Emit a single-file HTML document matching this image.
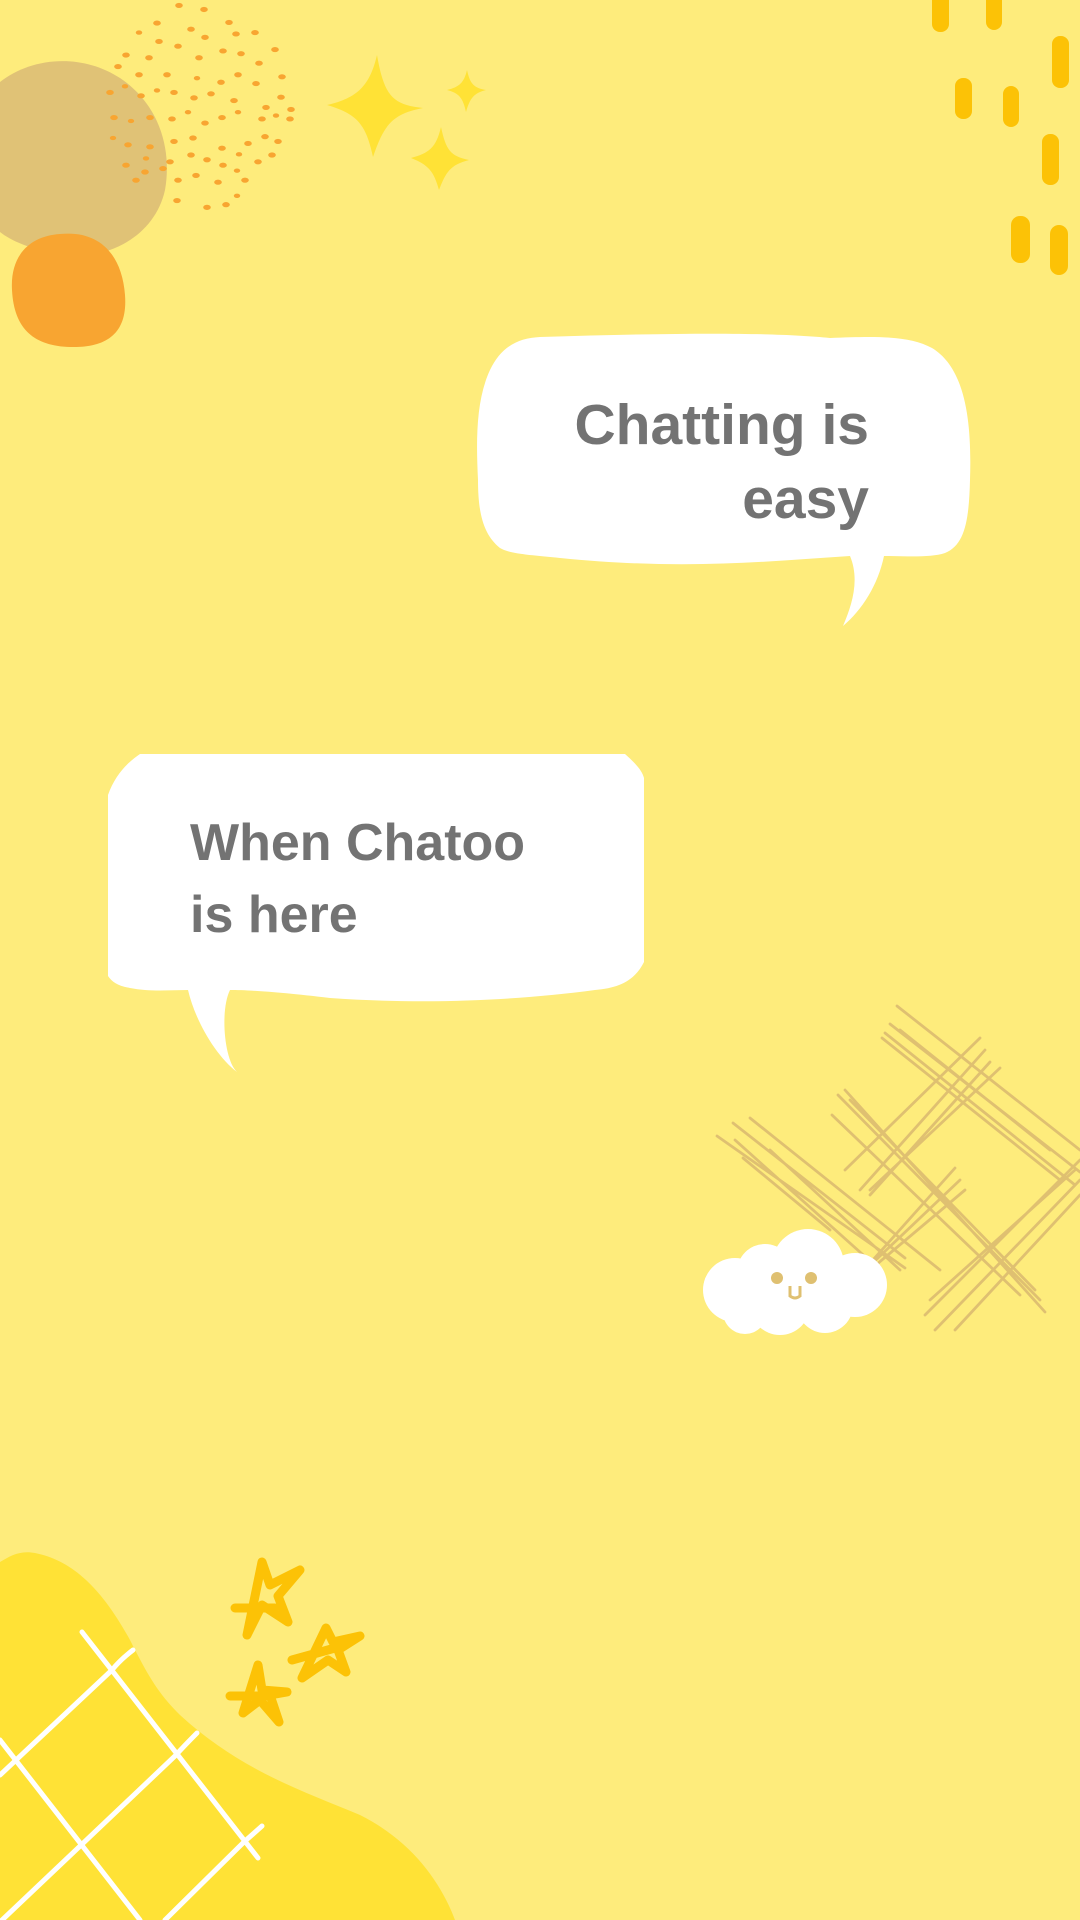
<!DOCTYPE html>
<html><head><meta charset="utf-8"><style>
html,body{margin:0;padding:0;width:1080px;height:1920px;overflow:hidden;background:#feec7c}
svg{display:block}
text{font-family:"Liberation Sans",sans-serif;font-weight:bold;fill:#737373}
</style></head><body>
<svg width="1080" height="1920" viewBox="0 0 1080 1920" xmlns="http://www.w3.org/2000/svg">
<rect width="1080" height="1920" fill="#feec7c"/>
<!-- tan blob -->
<path d="M0 82 C30 58 80 52 120 78 C160 105 172 150 165 190 C155 235 110 260 65 255 C30 250 10 240 0 232 Z" fill="#e0c276"/>
<!-- orange blob -->
<path d="M60 234 C100 230 122 255 125 295 C128 335 105 348 70 347 C35 346 14 330 12 290 C10 255 30 236 60 234 Z" fill="#f8a531"/>
<!-- dots -->
<g fill="#f8a531" transform="matrix(1,0,0,0.68,0,2)">
<circle cx="179" cy="5" r="3.8"/><circle cx="204" cy="11" r="3.8"/><circle cx="157" cy="31" r="3.8"/><circle cx="191" cy="40" r="3.8"/><circle cx="229" cy="30" r="3.8"/><circle cx="139" cy="45" r="3.2"/><circle cx="159" cy="58" r="3.8"/><circle cx="178" cy="65" r="3.8"/><circle cx="205" cy="52" r="3.8"/><circle cx="236" cy="47" r="3.8"/><circle cx="255" cy="45" r="3.8"/><circle cx="275" cy="70" r="3.8"/>
<circle cx="126" cy="78" r="3.8"/><circle cx="149" cy="82" r="3.8"/><circle cx="199" cy="82" r="3.8"/><circle cx="223" cy="72" r="3.8"/><circle cx="241" cy="76" r="3.8"/><circle cx="259" cy="90" r="3.8"/><circle cx="118" cy="95" r="3.8"/><circle cx="139" cy="107" r="3.8"/><circle cx="167" cy="107" r="3.8"/><circle cx="197" cy="112" r="3.2"/><circle cx="221" cy="118" r="3.8"/><circle cx="238" cy="107" r="3.8"/><circle cx="256" cy="120" r="3.8"/><circle cx="282" cy="110" r="3.8"/>
<circle cx="110" cy="133" r="3.8"/><circle cx="125" cy="124" r="3.2"/><circle cx="141" cy="138" r="3.8"/><circle cx="157" cy="130" r="3.2"/><circle cx="174" cy="133" r="3.8"/><circle cx="194" cy="141" r="3.8"/><circle cx="211" cy="135" r="3.8"/><circle cx="234" cy="145" r="3.8"/><circle cx="266" cy="155" r="3.8"/><circle cx="281" cy="140" r="3.8"/><circle cx="291" cy="158" r="3.8"/>
<circle cx="114" cy="170" r="3.8"/><circle cx="131" cy="175" r="3.2"/><circle cx="150" cy="170" r="3.8"/><circle cx="172" cy="172" r="3.8"/><circle cx="188" cy="162" r="3.2"/><circle cx="205" cy="178" r="3.8"/><circle cx="222" cy="170" r="3.8"/><circle cx="238" cy="162" r="3.2"/><circle cx="262" cy="172" r="3.8"/><circle cx="276" cy="167" r="3.2"/><circle cx="290" cy="172" r="3.8"/>
<circle cx="113" cy="200" r="3.2"/><circle cx="128" cy="210" r="3.8"/><circle cx="150" cy="213" r="3.8"/><circle cx="174" cy="205" r="3.8"/><circle cx="193" cy="200" r="3.8"/><circle cx="222" cy="215" r="3.8"/><circle cx="248" cy="208" r="3.8"/><circle cx="265" cy="198" r="3.8"/><circle cx="278" cy="205" r="3.8"/>
<circle cx="126" cy="240" r="3.8"/><circle cx="146" cy="230" r="3.2"/><circle cx="170" cy="235" r="3.8"/><circle cx="191" cy="225" r="3.8"/><circle cx="207" cy="232" r="3.8"/><circle cx="223" cy="240" r="3.8"/><circle cx="239" cy="224" r="3.2"/><circle cx="258" cy="235" r="3.8"/><circle cx="272" cy="225" r="3.8"/>
<circle cx="136" cy="262" r="3.8"/><circle cx="145" cy="250" r="3.8"/><circle cx="163" cy="245" r="3.8"/><circle cx="178" cy="262" r="3.8"/><circle cx="196" cy="255" r="3.8"/><circle cx="218" cy="265" r="3.8"/><circle cx="237" cy="248" r="3.2"/><circle cx="245" cy="262" r="3.8"/>
<circle cx="177" cy="292" r="3.8"/><circle cx="207" cy="302" r="3.8"/><circle cx="226" cy="298" r="3.8"/><circle cx="237" cy="285" r="3.2"/>
</g>
<!-- sparkles -->
<g fill="#ffe236">
<path d="M377 55 C384 95 392 105 423 108 C392 114 384 125 373 157 C366 125 358 114 327 105 C358 98 370 85 377 55 Z"/>
<path d="M467 70 C470 84 474 88 486 90 C474 93 470 98 466 112 C463 98 459 93 447 90 C459 87 464 83 467 70 Z"/>
<path d="M441 127 C446 150 450 156 469 160 C450 165 446 172 439 190 C434 172 429 165 411 158 C429 153 436 148 441 127 Z"/>
</g>
<!-- dashes -->
<g fill="#fcc206">
<rect x="932" y="-10" width="17" height="42" rx="8"/>
<rect x="986" y="-10" width="16" height="40" rx="8"/>
<rect x="1052" y="36" width="17" height="52" rx="8"/>
<rect x="955" y="78" width="17" height="41" rx="8"/>
<rect x="1003" y="86" width="16" height="41" rx="8"/>
<rect x="1042" y="134" width="17" height="51" rx="8"/>
<rect x="1011" y="216" width="19" height="47" rx="9"/>
<rect x="1050" y="225" width="18" height="50" rx="9"/>
</g>
<!-- bubble 1 -->
<path d="M540 337 C700 332 780 333 830 338 C880 336 910 336 932 348 C965 368 972 420 970 480 C969 520 965 545 945 553 C930 558 905 556 884 556 C878 585 862 610 843 626 C852 605 860 580 850 556 C760 562 680 570 560 558 C530 555 510 554 500 548 C484 535 478 515 478 480 C476 440 476 400 490 370 C502 345 520 338 540 337 Z" fill="#fff"/>
<text x="869" y="444" font-size="57" text-anchor="end">Chatting is</text>
<text x="869" y="518" font-size="57" text-anchor="end">easy</text>
<!-- bubble 2 -->
<path d="M140 754 L625 754 C635 763 642 770 644 778 L644 962 C635 980 620 988 595 990 C520 1000 430 1005 330 998 C280 992 250 990 230 990 C220 1010 224 1060 237 1072 C215 1055 195 1020 188 990 C170 990 150 992 130 988 C118 986 112 982 108 976 L108 795 C115 775 128 762 140 754 Z" fill="#fff"/>
<text x="190" y="860" font-size="52">When Chatoo</text>
<text x="190" y="932" font-size="52">is here</text>
<!-- crosshatch -->
<g stroke="#dfc071" stroke-width="2.8" stroke-linecap="round" fill="none">
<path d="M897 1006 L1080 1150 M890 1024 L1080 1172 M885 1033 L1075 1185 M882 1038 L1060 1180 M900 1030 L1050 1150"/>
<path d="M845 1090 L1045 1312 M838 1095 L1040 1300 M832 1115 L1020 1295 M850 1100 L1035 1290"/>
<path d="M717 1136 L905 1268 M733 1123 L905 1258 M750 1118 L940 1270 M735 1140 L880 1270 M743 1158 L830 1230 M770 1150 L900 1270"/>
<path d="M980 1038 L845 1170 M985 1050 L860 1190 M990 1062 L870 1195 M1000 1068 L870 1190"/>
<path d="M955 1168 L855 1280 M960 1180 L860 1275 M965 1190 L870 1270"/>
<path d="M1080 1160 L925 1315 M1080 1180 L935 1330 M1080 1195 L955 1330 M1075 1170 L930 1300"/>
</g>
<!-- cloud -->
<g fill="#fff">
<circle cx="735" cy="1290" r="32"/><circle cx="765" cy="1272" r="28"/><circle cx="808" cy="1265" r="36"/><circle cx="855" cy="1285" r="32"/><circle cx="780" cy="1305" r="30"/><circle cx="825" cy="1305" r="28"/><circle cx="745" cy="1312" r="22"/><circle cx="722" cy="1285" r="18"/>
</g>
<circle cx="777" cy="1278" r="6" fill="#dfc071"/>
<circle cx="811" cy="1278" r="6" fill="#dfc071"/>
<path d="M790 1286 L790 1296 Q795 1300 800 1296 L800 1286" stroke="#dfc071" stroke-width="3" fill="none"/>
<!-- bottom blob -->
<path d="M0 1562 C10 1556 20 1550 35 1553 C70 1560 100 1585 130 1640 C150 1680 160 1695 180 1715 C240 1770 300 1790 360 1815 C410 1840 440 1880 455 1920 L0 1920 Z" fill="#ffe236"/>
<g stroke="#fff" stroke-width="5" stroke-linecap="round" fill="none">
<path d="M82 1632 L258 1858"/>
<path d="M0 1740 L140 1920"/>
<path d="M133 1650 Q120 1660 112 1670 L0 1775"/>
<path d="M197 1733 Q185 1745 175 1756 L0 1922"/>
<path d="M262 1826 Q252 1835 245 1841 L165 1920"/>
</g>
<!-- stars -->
<g stroke="#fcc206" stroke-width="9" stroke-linejoin="round" stroke-linecap="round" fill="none">
<path d="M262 1562 L247 1635 L262 1605 L288 1622 L278 1596 L300 1570 L270 1585 L262 1562 Z M235 1608 L275 1608"/>
<path d="M326 1628 L302 1678 L328 1660 L346 1672 L338 1650 L360 1636 L333 1642 L326 1628 Z M292 1660 L335 1648"/>
<path d="M258 1665 L243 1713 L260 1700 L279 1722 L270 1695 L287 1692 L262 1690 L258 1665 Z M230 1696 L270 1696"/>
</g>
</svg>
</body></html>
